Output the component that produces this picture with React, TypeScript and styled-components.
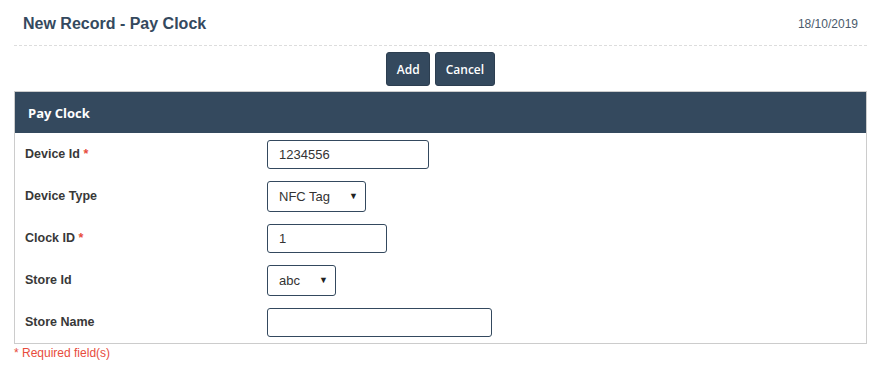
import React from 'react';
import styled, { createGlobalStyle } from 'styled-components';

const GlobalStyle = createGlobalStyle`
  body {
    margin: 0;
    background: #fff;
    font-family: "Liberation Sans", Arial, sans-serif;
  }
`;

const Page = styled.div`
  padding: 0 10px 0 14px;
`;

const TitleBar = styled.div`
  display: flex;
  justify-content: space-between;
  align-items: center;
  height: 46px;
  padding: 0 9px;
  border-bottom: 1px dashed #ddd;
  box-sizing: border-box;
`;

const Title = styled.h1`
  margin: 0;
  padding-top: 2px;
  font-size: 16px;
  font-weight: bold;
  color: #34495e;
`;

const DateText = styled.span`
  font-size: 12px;
  color: #4a5a6b;
  padding-top: 3px;
`;

const Toolbar = styled.div`
  display: flex;
  justify-content: center;
  gap: 5px;
  margin-top: 6px;
`;

const Button = styled.button`
  height: 34px;
  padding: 0 9.5px;
  background: #34495e;
  color: #fff;
  border: 1px solid #2c3e50;
  border-radius: 3px;
  font-family: "Open Sans", "Liberation Sans", sans-serif;
  font-size: 12px;
  font-weight: 600;
  cursor: pointer;
`;

const Panel = styled.div`
  margin-top: 5px;
  border: 1px solid #ccc;
`;

const PanelHeader = styled.div`
  height: 41px;
  display: flex;
  align-items: center;
  padding-left: 13px;
  background: #34495e;
  color: #fff;
  font-family: "Open Sans", "Liberation Sans", sans-serif;
  font-size: 13px;
  font-weight: 700;
`;

const Row = styled.div`
  display: grid;
  grid-template-columns: 252px 1fr;
  align-items: center;
  height: 42px;
`;

const Label = styled.label`
  padding-left: 10px;
  font-size: 12.5px;
  font-weight: bold;
  color: #383838;
`;

const Star = styled.span`
  color: #e74c3c;
`;

const Input = styled.input<{ $w: number }>`
  width: ${p => p.$w}px;
  height: 29px;
  box-sizing: border-box;
  border: 1px solid #34495e;
  border-radius: 3px;
  padding: 0 11px;
  font-family: "Liberation Sans", Arial, sans-serif;
  font-size: 13px;
  color: #333;
  outline: none;
`;

const SelectBox = styled.div<{ $w: number }>`
  position: relative;
  width: ${p => p.$w}px;
  height: 31px;
`;

const Select = styled.select`
  appearance: none;
  width: 100%;
  height: 100%;
  box-sizing: border-box;
  border: 1px solid #34495e;
  border-radius: 3px;
  padding: 0 11px;
  background: #fff;
  font-family: "Liberation Sans", Arial, sans-serif;
  font-size: 13px;
  color: #333;
  outline: none;
`;

const Arrow = styled.span`
  position: absolute;
  right: 8px;
  top: 50%;
  transform: translateY(-50%);
  font-size: 9px;
  color: #222;
  pointer-events: none;
`;

const Required = styled.div`
  margin-top: 2px;
  font-size: 12px;
  color: #e74c3c;
`;

export default function App() {
  return (
    <>
      <GlobalStyle />
      <Page>
        <TitleBar>
          <Title>New Record - Pay Clock</Title>
          <DateText>18/10/2019</DateText>
        </TitleBar>
        <Toolbar>
          <Button>Add</Button>
          <Button>Cancel</Button>
        </Toolbar>
        <Panel>
          <PanelHeader>Pay Clock</PanelHeader>
          <Row>
            <Label>Device Id <Star>*</Star></Label>
            <div><Input $w={162} defaultValue="1234556" /></div>
          </Row>
          <Row>
            <Label>Device Type</Label>
            <SelectBox $w={99}>
              <Select defaultValue="NFC Tag">
                <option>NFC Tag</option>
              </Select>
              <Arrow>▼</Arrow>
            </SelectBox>
          </Row>
          <Row>
            <Label>Clock ID <Star>*</Star></Label>
            <div><Input $w={120} defaultValue="1" /></div>
          </Row>
          <Row>
            <Label>Store Id</Label>
            <SelectBox $w={69}>
              <Select defaultValue="abc">
                <option>abc</option>
              </Select>
              <Arrow>▼</Arrow>
            </SelectBox>
          </Row>
          <Row>
            <Label>Store Name</Label>
            <div><Input $w={225} defaultValue="" /></div>
          </Row>
        </Panel>
        <Required>* Required field(s)</Required>
      </Page>
    </>
  );
}
